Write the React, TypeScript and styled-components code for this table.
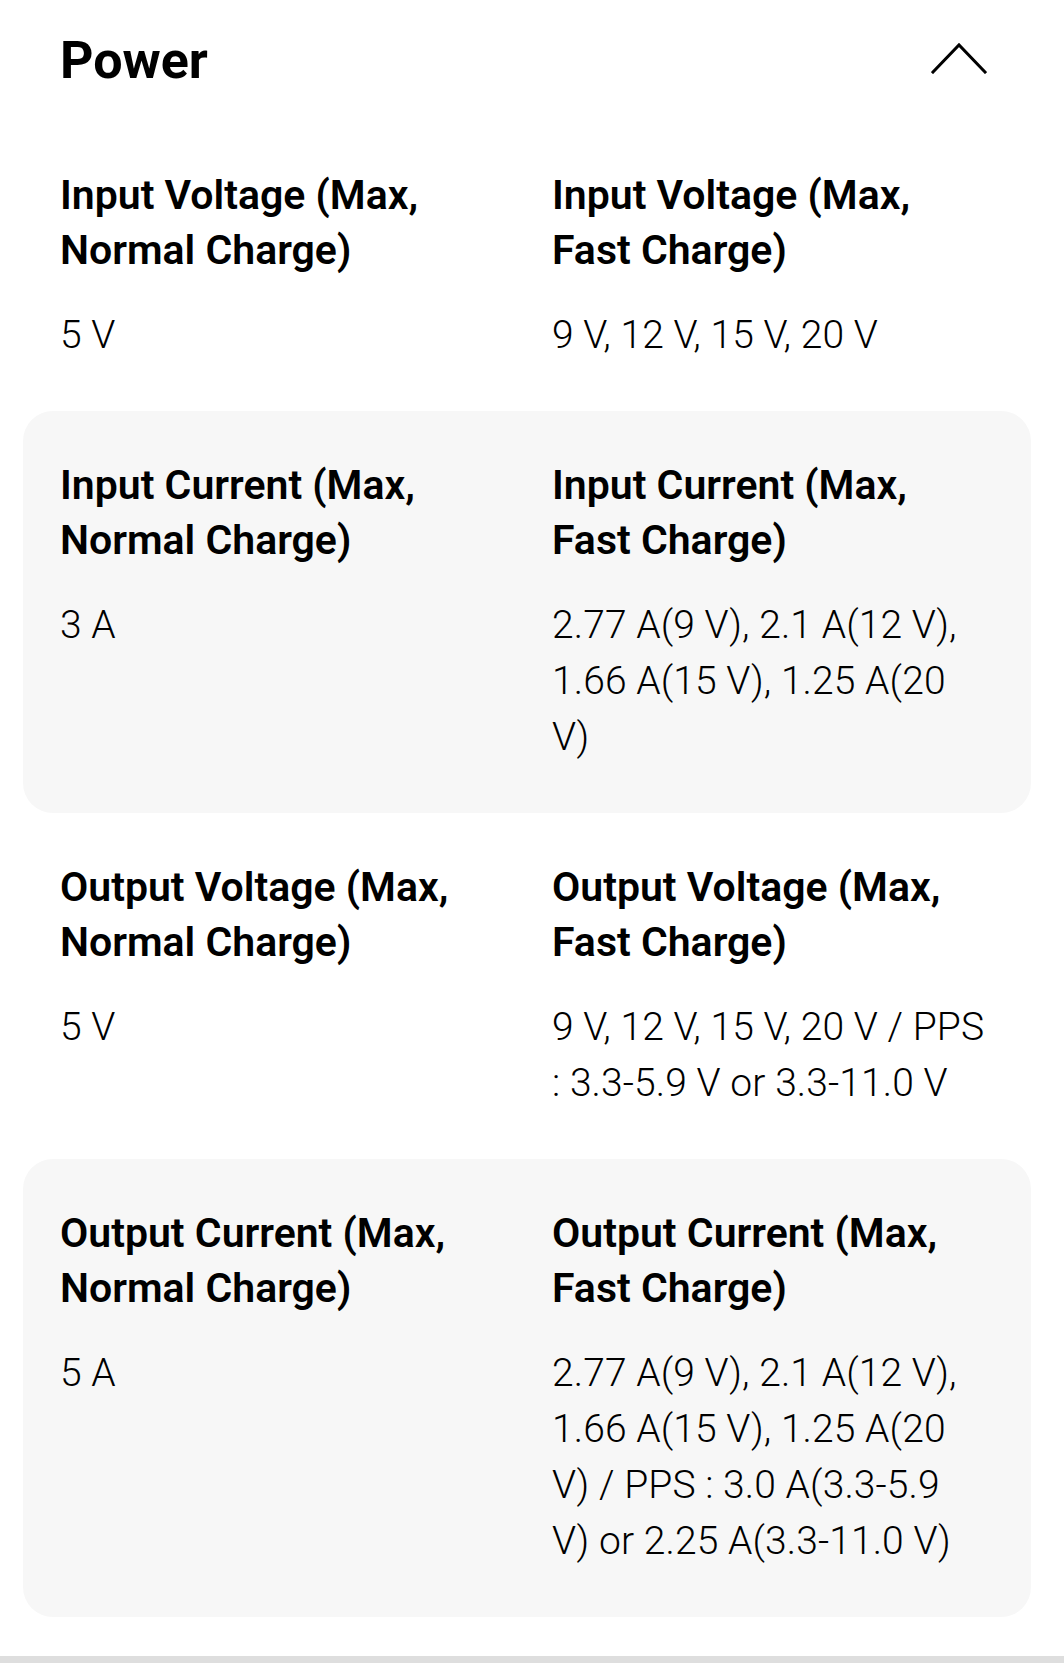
import React from "react";
import styled, { createGlobalStyle } from "styled-components";

const GlobalStyle = createGlobalStyle`
  html, body {
    margin: 0;
    padding: 0;
    background: #ffffff;
  }
  body {
    font-family: Roboto, "Noto Sans", "Liberation Sans", sans-serif;
    color: #000000;
    -webkit-font-smoothing: antialiased;
  }
`;

const Page = styled.div`
  width: 1064px;
  display: flex;
  flex-direction: column;
`;

const Section = styled.section`
  display: flex;
  flex-direction: column;
  padding: 0 33px 0 23px;
`;

const TitleBar = styled.header`
  display: flex;
  align-items: center;
  justify-content: space-between;
  padding: 30px 37px 30px 37px;
`;

const Title = styled.h2`
  margin: 0;
  font-size: 52px;
  line-height: 61px;
  font-weight: 700;
  letter-spacing: 0;
  color: #000;
`;

const ToggleButton = styled.button`
  display: flex;
  align-items: center;
  justify-content: center;
  padding: 0;
  margin: 0 7px 5px 0;
  border: none;
  background: transparent;
  cursor: pointer;
`;

const SpecBlock = styled.div<{ $shaded: boolean }>`
  display: grid;
  grid-template-columns: 1fr 1fr;
  column-gap: 50px;
  padding: 47px 37px 48px 37px;
  border-radius: 30px;
  background: ${(p) => (p.$shaded ? "#f7f7f7" : "transparent")};
`;

const SpecItem = styled.div`
  display: flex;
  flex-direction: column;
  gap: 29px;
  min-width: 0;
`;

const SpecLabel = styled.div`
  padding-right: 24px;
  font-size: 41px;
  line-height: 55px;
  font-weight: 600;
  letter-spacing: 0;
  color: #000;
`;

const SpecValue = styled.div`
  font-size: 39px;
  line-height: 56px;
  font-weight: 300;
  letter-spacing: 0.1px;
  color: #000;
`;

const ValueLine = styled.span`
  display: block;
  white-space: nowrap;
`;

const BottomDivider = styled.div`
  margin-top: 39px;
  height: 8px;
  background: #dedede;
`;

const ChevronUp = () => (
  <svg width="56" height="32" viewBox="0 0 56 32" fill="none" aria-hidden="true">
    <polyline
      points="2,30 28,3 54,30"
      stroke="#000"
      strokeWidth="3"
      strokeLinecap="square"
      strokeLinejoin="miter"
      fill="none"
    />
  </svg>
);

type Spec = { label: string; value: string[] };

const rows: { shaded: boolean; specs: [Spec, Spec] }[] = [
  {
    shaded: false,
    specs: [
      { label: "Input Voltage (Max, Normal Charge)", value: ["5 V"] },
      { label: "Input Voltage (Max, Fast Charge)", value: ["9 V, 12 V, 15 V, 20 V"] },
    ],
  },
  {
    shaded: true,
    specs: [
      { label: "Input Current (Max, Normal Charge)", value: ["3 A"] },
      {
        label: "Input Current (Max, Fast Charge)",
        value: ["2.77 A(9 V), 2.1 A(12 V),", "1.66 A(15 V), 1.25 A(20", "V)"],
      },
    ],
  },
  {
    shaded: false,
    specs: [
      { label: "Output Voltage (Max, Normal Charge)", value: ["5 V"] },
      {
        label: "Output Voltage (Max, Fast Charge)",
        value: ["9 V, 12 V, 15 V, 20 V / PPS", ": 3.3-5.9 V or 3.3-11.0 V"],
      },
    ],
  },
  {
    shaded: true,
    specs: [
      { label: "Output Current (Max, Normal Charge)", value: ["5 A"] },
      {
        label: "Output Current (Max, Fast Charge)",
        value: [
          "2.77 A(9 V), 2.1 A(12 V),",
          "1.66 A(15 V), 1.25 A(20",
          "V) / PPS : 3.0 A(3.3-5.9",
          "V) or 2.25 A(3.3-11.0 V)",
        ],
      },
    ],
  },
];

export default function App() {
  return (
    <Page>
      <GlobalStyle />
      <Section>
        <TitleBar>
          <Title>Power</Title>
          <ToggleButton aria-label="Collapse">
            <ChevronUp />
          </ToggleButton>
        </TitleBar>
        {rows.map((row, i) => (
          <SpecBlock key={i} $shaded={row.shaded}>
            {row.specs.map((spec, j) => (
              <SpecItem key={j}>
                <SpecLabel>{spec.label}</SpecLabel>
                <SpecValue>
                  {spec.value.map((line, k) => (
                    <ValueLine key={k}>{line}</ValueLine>
                  ))}
                </SpecValue>
              </SpecItem>
            ))}
          </SpecBlock>
        ))}
      </Section>
      <BottomDivider />
    </Page>
  );
}
